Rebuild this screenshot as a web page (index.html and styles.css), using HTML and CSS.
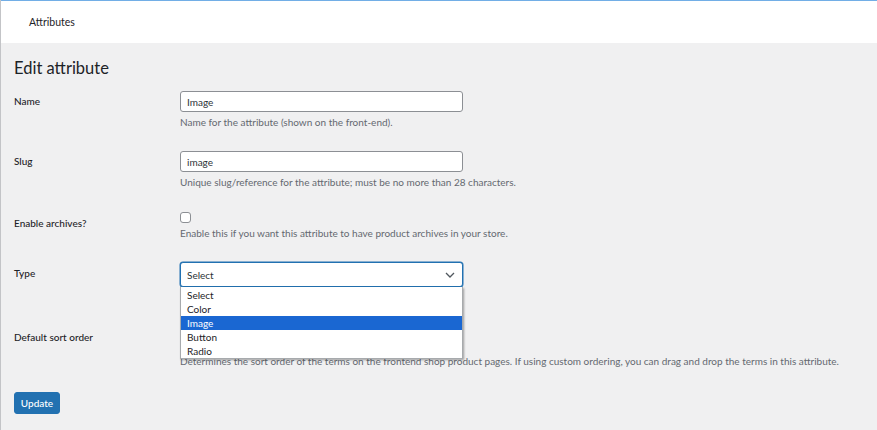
FILE: index.html
```html
<!DOCTYPE html>
<html>
<head>
    <title>Edit attribute</title>
    <link rel="stylesheet" href="styles.css">
</head>
<body>
    <div class="page">
        <div class="topbar">
            <span class="topbar-title">Attributes</span>
        </div>
        <div class="wrap">
            <h1 class="page-title">Edit attribute</h1>
            <form class="form-table">
                <div class="form-row row-name">
                    <label class="form-label">Name</label>
                    <div class="form-field">
                        <input class="text-input" type="text" value="Image">
                        <p class="description">Name for the attribute (shown on the front-end).</p>
                    </div>
                </div>
                <div class="form-row row-slug">
                    <label class="form-label">Slug</label>
                    <div class="form-field">
                        <input class="text-input" type="text" value="image">
                        <p class="description">Unique slug/reference for the attribute; must be no more than 28 characters.</p>
                    </div>
                </div>
                <div class="form-row row-archive">
                    <label class="form-label label-check">Enable archives?</label>
                    <div class="form-field">
                        <span class="checkbox"></span>
                        <p class="description">Enable this if you want this attribute to have product archives in your store.</p>
                    </div>
                </div>
                <div class="form-row row-type">
                    <label class="form-label label-select">Type</label>
                    <div class="form-field">
                        <div class="select select-focus">
                            <span>Select</span>
                            <svg class="chevron" width="10" height="6" viewBox="0 0 10 6">
                                <path d="M1 1l4 4 4-4" fill="none" stroke="#50575e" stroke-width="1.3"/>
                            </svg>
                        </div>
                        <ul class="dropdown">
                            <li>Select</li>
                            <li>Color</li>
                            <li class="active">Image</li>
                            <li>Button</li>
                            <li>Radio</li>
                        </ul>
                    </div>
                </div>
                <div class="form-row row-sort">
                    <label class="form-label label-select">Default sort order</label>
                    <div class="form-field">
                        <div class="select"></div>
                        <p class="description">Determines the sort order of the terms on the frontend shop product pages. If using custom ordering, you can drag and drop the terms in this attribute.</p>
                    </div>
                </div>
                <div class="submit">
                    <button class="button-primary" type="button">Update</button>
                </div>
            </form>
        </div>
    </div>
</body>
</html>
```

FILE: styles.css
```css
body {
    margin: 0;
    padding: 0;
    background-color: #f0f0f1;
    font-family: Lato, "Noto Sans", sans-serif;
    color: #1d2327;
}

.page {
    width: 877px;
    height: 430px;
    box-sizing: border-box;
    border-left: 1px solid #c3c4c7;
    overflow: hidden;
}

.topbar {
    height: 42px;
    background-color: #fff;
    border-top: 1px solid #72aee6;
    display: flex;
    align-items: center;
    padding-left: 28px;
}

.topbar-title {
    font-size: 10.5px;
    color: #1d2327;
}

.wrap {
    padding-left: 13px;
}

.page-title {
    font-size: 16.5px;
    font-weight: 400;
    line-height: 24px;
    margin: 13px 0 0 0;
}

.form-table {
    margin: 0;
}

.form-row {
    display: flex;
}

.form-label {
    width: 166px;
    flex-shrink: 0;
    font-size: 10px;
    font-weight: 500;
    line-height: 14px;
    padding-top: 3px;
}

.form-field {
    position: relative;
}

.row-name { margin-top: 11px; }
.row-slug { margin-top: 22px; }
.row-archive { margin-top: 23px; }
.row-type { margin-top: 22px; }
.row-sort { margin-top: 39px; }

.label-check { padding-top: 4px; }
.label-select { padding-top: 4px; }

.text-input {
    display: block;
    box-sizing: border-box;
    width: 283px;
    height: 21px;
    margin: 0;
    padding: 0 6px;
    border: 1px solid #8c8f94;
    border-radius: 3px;
    background-color: #fff;
    font-family: inherit;
    font-size: 10px;
    color: #2c3338;
    outline: none;
}

.description {
    margin: 3px 0 0 0;
    font-size: 10px;
    line-height: 14px;
    color: #646970;
}

.checkbox {
    display: block;
    width: 9px;
    height: 9px;
    border: 1px solid #8c8f94;
    border-radius: 3px;
    background-color: #fff;
}

.select {
    box-sizing: border-box;
    width: 283px;
    height: 23px;
    border: 1px solid #8c8f94;
    border-radius: 3px;
    background-color: #fff;
    display: flex;
    align-items: center;
    justify-content: space-between;
    padding: 0 6px;
    font-size: 10px;
    color: #2c3338;
}

.select-focus {
    height: 25px;
    border-color: #2271b1;
    box-shadow: 0 0 0 0.5px #2271b1;
}

.chevron {
    margin-right: 1px;
}

.dropdown {
    position: absolute;
    top: 25px;
    left: 0;
    z-index: 2;
    box-sizing: border-box;
    width: 283px;
    margin: 0;
    padding: 1px 0 0 0;
    list-style: none;
    background-color: #fff;
    border: 1px solid #a7aaad;
    border-top: none;
    box-shadow: 1px 1px 2px rgba(0, 0, 0, 0.35);
}

.dropdown li {
    height: 14px;
    line-height: 15px;
    padding-left: 6px;
    font-size: 10px;
    color: #1d2327;
}

.dropdown li.active {
    background-color: #1a67d2;
    color: #fff;
}

.row-sort .description {
    margin-top: 5px;
}

.submit {
    margin-top: 24px;
}

.button-primary {
    display: block;
    width: 46px;
    height: 22px;
    margin: 0;
    padding: 0;
    border: 1px solid #2271b1;
    border-radius: 3px;
    background-color: #2271b1;
    color: #fff;
    font-family: inherit;
    font-size: 10px;
    font-weight: 500;
    cursor: pointer;
}
```
